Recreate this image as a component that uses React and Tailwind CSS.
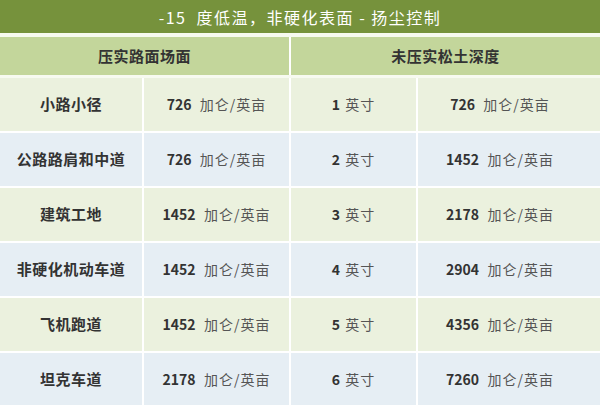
import React from "react";

const rows = [
  { name: "小路小径", rate: "726", depth: "1 英寸", total: "726" },
  { name: "公路路肩和中道", rate: "726", depth: "2 英寸", total: "1452" },
  { name: "建筑工地", rate: "1452", depth: "3 英寸", total: "2178" },
  { name: "非硬化机动车道", rate: "1452", depth: "4 英寸", total: "2904" },
  { name: "飞机跑道", rate: "1452", depth: "5 英寸", total: "4356" },
  { name: "坦克车道", rate: "2178", depth: "6 英寸", total: "7260" },
];

const font = { fontFamily: '"Noto Sans CJK SC", "Noto Sans", sans-serif' };

function Rate({ value }) {
  return (
    <span className="text-[14px]">
      <span className="font-bold text-[#333]">{value}</span>
      <span className="text-[#555] tracking-[1px]">&nbsp; 加仑/英亩</span>
    </span>
  );
}

export default function App() {
  return (
    <div className="w-[600px] h-[405px] overflow-hidden bg-[#f7faf0]" style={font}>
      <div className="h-[33px] bg-[#76923c] flex items-center justify-center text-white text-[16px] tracking-[1.5px] whitespace-pre">
        -15  度低温，非硬化表面 - 扬尘控制
      </div>
      <div className="mt-[4px] grid grid-cols-[289px_1fr] gap-x-[2px] bg-white">
        <div className="h-[38px] bg-[#c3d69b] flex items-center justify-center font-bold text-[15px] tracking-[0.5px] text-[#333]">压实路面场面</div>
        <div className="h-[38px] bg-[#c3d69b] flex items-center justify-center font-bold text-[15px] tracking-[0.5px] text-[#333]">未压实松土深度</div>
      </div>
      <div className="mt-[3px] grid grid-cols-[142px_145px_125px_1fr] gap-x-[2px] gap-y-[2px] bg-white">
        {rows.map((r, i) => {
          const bg = i % 2 === 0 ? "bg-[#ebf1de]" : "bg-[#e6eef4]";
          return (
            <React.Fragment key={r.name}>
              <div className={`h-[53px] ${bg} flex items-center justify-center font-bold text-[15px] tracking-[0.5px] text-[#333]`}>{r.name}</div>
              <div className={`h-[53px] ${bg} flex items-center justify-center`}><Rate value={r.rate} /></div>
              <div className={`h-[53px] ${bg} flex items-center justify-center text-[14px] text-[#555] tracking-[1px]`}>
                <span className="font-bold text-[#333]">{r.depth.split(" ")[0]}</span>&nbsp;{r.depth.split(" ")[1]}
              </div>
              <div className={`h-[53px] ${bg} flex items-center justify-center pr-[18px]`}><Rate value={r.total} /></div>
            </React.Fragment>
          );
        })}
      </div>
    </div>
  );
}
